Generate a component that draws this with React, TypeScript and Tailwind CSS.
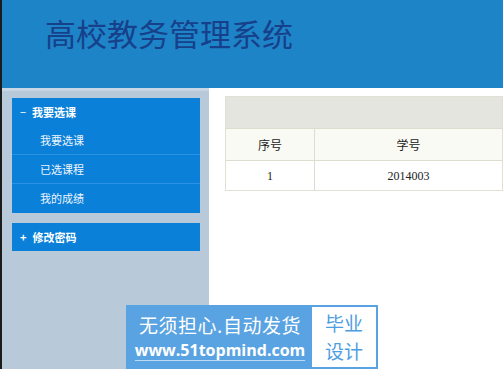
const font = "font-['Microsoft_YaHei','Noto_Sans_CJK_SC',sans-serif]";

const subItems = ["我要选课", "已选课程", "我的成绩"];

export default function App() {
  return (
    <div className={`relative flex h-[369px] w-[503px] overflow-hidden border-l-2 border-[#1c1c1c] bg-white ${font}`}>
      <div className="flex w-full flex-col">
        <header className="flex h-[88px] items-start bg-[#1e84c8] pl-[43px] pt-[11px]">
          <h1 className="text-[31px] leading-[44px] text-[#17408a]">高校教务管理系统</h1>
        </header>

        <div className="flex flex-1">
          <aside className="w-[207px] border-t-[3px] border-[#c9d6e3] bg-[#b8c9d9] px-[10px] pt-[7px]">
            <div className="w-[188px] bg-[#0a80d8]">
              <div className="flex h-[28px] items-center gap-[6px] pl-[8px] text-[11px] font-bold text-white">
                <span className="font-normal">−</span>
                <span>我要选课</span>
              </div>
              {subItems.map((item, i) => (
                <div
                  key={item}
                  className={`flex h-[29px] items-center pl-[28px] text-[11px] text-[#eef5ff] ${i < 2 ? "border-b border-[#2b93e4]" : ""}`}
                >
                  {item}
                </div>
              ))}
            </div>

            <div className="mt-[10px] flex h-[28px] w-[188px] items-center gap-[6px] bg-[#0a80d8] pl-[8px] text-[11px] font-bold text-white">
              <span>+</span>
              <span>修改密码</span>
            </div>
          </aside>

          <main className="flex-1 pl-[16px] pt-[8px]">
            <div className="border border-[#e0e0d4]">
              <div className="h-[31px] bg-[#e5e5df]" />
              <div className="flex h-[32px] border-t border-[#dedccf] bg-[#fafaf4] text-[12px] text-[#222]">
                <div className="flex w-[89px] items-center justify-center border-r border-[#dedccf]">序号</div>
                <div className="flex flex-1 items-center justify-center">学号</div>
              </div>
              <div className="flex h-[30px] border-t border-[#dedccf] bg-white font-['Liberation_Serif',serif] text-[12px] text-[#222]">
                <div className="flex w-[89px] items-center justify-center border-r border-[#dedccf]">1</div>
                <div className="flex flex-1 items-center justify-center">2014003</div>
              </div>
            </div>
          </main>
        </div>
      </div>

      <div className="absolute left-[124px] top-[305px] flex h-[64px] w-[252px] border-[2px] border-[#5aa3e2] bg-[#5aa3e2]">
        <div className="flex w-[184px] flex-col items-center justify-center gap-[3px] text-white">
          <span className="text-[19px] leading-[24px] tracking-[0.5px]">无须担心.自动发货</span>
          <span className="border-b border-white/60 font-['Open_Sans',sans-serif] text-[16px] leading-[20px] font-bold">www.51topmind.com</span>
        </div>
        <div className="flex flex-1 flex-col items-center justify-center bg-white text-[19px] leading-[28px] text-[#4d9ee0]">
          <span>毕业</span>
          <span>设计</span>
        </div>
      </div>
    </div>
  );
}
